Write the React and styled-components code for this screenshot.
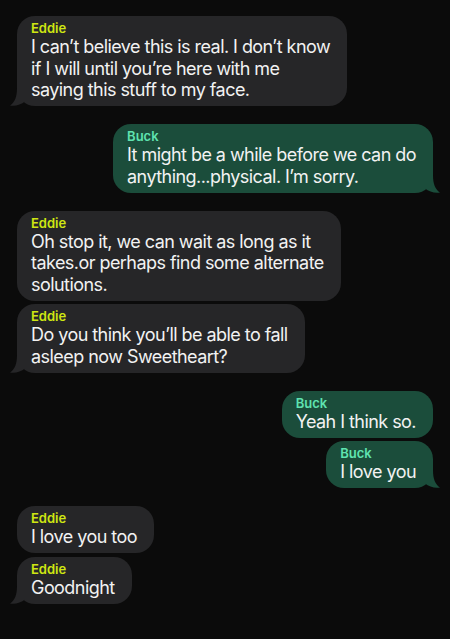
import React from "react";
import styled, { createGlobalStyle } from "styled-components";

const Global = createGlobalStyle`
  html, body {
    margin: 0;
    padding: 0;
    background: #0b0b0b;
  }
  body {
    font-family: Inter, "Open Sans", "Liberation Sans", sans-serif;
    -webkit-font-smoothing: antialiased;
  }
`;

const Thread = styled.div`
  display: flex;
  flex-direction: column;
  gap: 18px;
  padding: 16px 17px 0;
  min-height: 639px;
  box-sizing: border-box;
  background: #0b0b0b;
`;

const Group = styled.div`
  display: flex;
  flex-direction: column;
  gap: 3.5px;
  align-items: ${(p) => (p.$me ? "flex-end" : "flex-start")};
`;

const Bubble = styled.div`
  position: relative;
  background: ${(p) => (p.$me ? "#1b4d3b" : "#262628")};
  border-radius: 18px;
  padding: 4px 17px 5.5px 14px;
  color: #f2f2f2;
`;

const Name = styled.div`
  font-size: 13px;
  line-height: 16px;
  font-weight: 600;
  color: ${(p) => (p.$me ? "#5fe3b0" : "#cfe612")};
`;

const Text = styled.div`
  font-size: 18px;
  line-height: 21.5px;
  letter-spacing: -0.55px;
  white-space: nowrap;
`;

const Tail = styled.svg`
  position: absolute;
  bottom: 0;
  width: 20px;
  height: 18px;
  ${(p) => (p.$me ? "right: -7px; transform: scaleX(-1);" : "left: -7px;")}
`;

const messages = [
  {
    me: false,
    items: [
      [
        "I can\u2019t believe this is real. I don\u2019t know",
        "if I will until you\u2019re here with me",
        "saying this stuff to my face.",
      ],
    ],
  },
  {
    me: true,
    items: [
      [
        "It might be a while before we can do",
        "anything...physical. I\u2019m sorry.",
      ],
    ],
  },
  {
    me: false,
    items: [
      [
        "Oh stop it, we can wait as long as it",
        "takes.or perhaps find some alternate",
        "solutions.",
      ],
      ["Do you think you\u2019ll be able to fall", "asleep now Sweetheart?"],
    ],
  },
  {
    me: true,
    items: [["Yeah I think so."], ["I love you"]],
  },
  {
    me: false,
    items: [["I love you too"], ["Goodnight"]],
  },
];

function Message({ me, lines, tail }) {
  const color = me ? "#1b4d3b" : "#262628";
  return (
    <Bubble $me={me}>
      <Name $me={me}>{me ? "Buck" : "Eddie"}</Name>
      {lines.map((l, i) => (
        <Text key={i}>{l}</Text>
      ))}
      {tail && (
        <Tail $me={me} viewBox="0 0 20 18">
          <path
            d="M7 0 C7 9 5 14 0 17.6 C6 18.4 11 16.6 15 13.5 L15 0 Z"
            fill={color}
          />
        </Tail>
      )}
    </Bubble>
  );
}

export default function App() {
  return (
    <>
      <Global />
      <Thread>
        {messages.map((g, gi) => (
          <Group key={gi} $me={g.me}>
            {g.items.map((lines, i) => (
              <Message
                key={i}
                me={g.me}
                lines={lines}
                tail={i === g.items.length - 1}
              />
            ))}
          </Group>
        ))}
      </Thread>
    </>
  );
}
